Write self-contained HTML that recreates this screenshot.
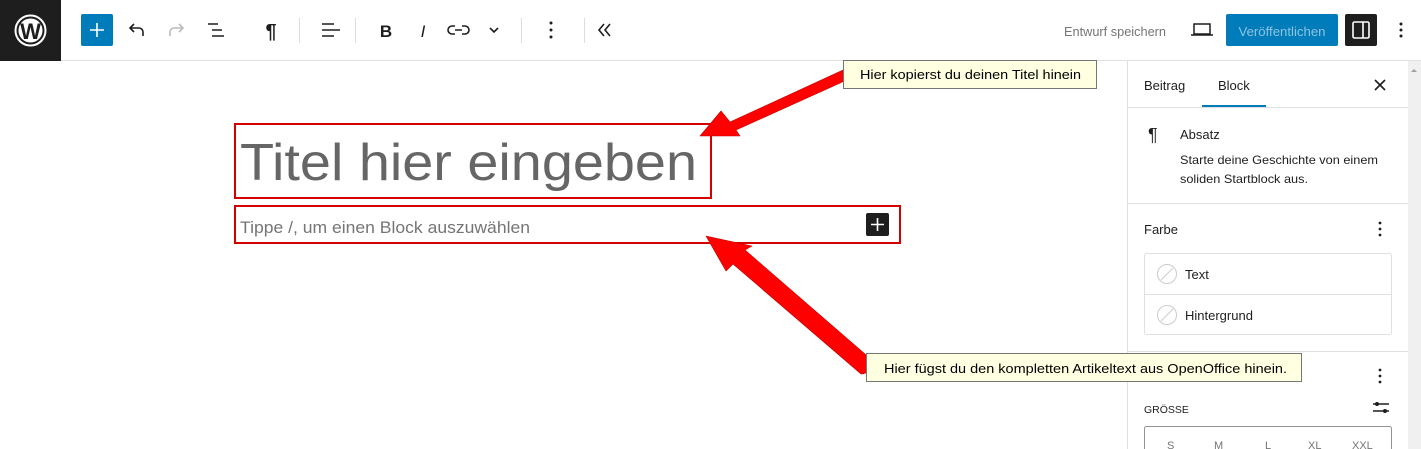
<!DOCTYPE html>
<html><head><meta charset="utf-8"><style>
html,body{margin:0;padding:0;background:#fff;width:1421px;height:449px;overflow:hidden}
svg{display:block}
text{font-family:"Liberation Sans",sans-serif}
</style></head><body>
<svg width="1421" height="449" viewBox="0 0 1421 449" xmlns="http://www.w3.org/2000/svg">
<rect x="0" y="0" width="1421" height="61" fill="#fff"/>
<line x1="61" y1="60.5" x2="1421" y2="60.5" stroke="#e0e0e0"/>
<rect x="0" y="0" width="61" height="61" fill="#1e1e1e"/>
<circle cx="30.5" cy="30.5" r="15" fill="none" stroke="#fff" stroke-width="2"/>
<circle cx="30.5" cy="30.5" r="12" fill="#fff"/>
<text x="30.5" y="39" font-size="22" font-weight="bold" text-anchor="middle" fill="#1e1e1e" font-family="Liberation Serif">W</text>
<rect x="81" y="14" width="32" height="32" rx="2" fill="#007cba"/>
<path d="M97 23v14M90 30h14" stroke="#fff" stroke-width="1.6"/>
<path d="M143 36v-4a4 4 0 0 0-4-4h-8M134 24l-4 4 4 4" fill="none" stroke="#1e1e1e" stroke-width="1.6"/>
<path d="M170 36v-4a4 4 0 0 1 4-4h8M179 24l4 4-4 4" fill="none" stroke="#bbb" stroke-width="1.6"/>
<path d="M208 24h10M212 30h10M212 36h12" stroke="#1e1e1e" stroke-width="1.6"/>
<text x="271" y="38" font-size="20" font-weight="bold" text-anchor="middle" fill="#1e1e1e">¶</text>
<line x1="299.5" y1="18" x2="299.5" y2="43" stroke="#ddd"/>
<path d="M322 24h12M322 30h18M322 36h12" stroke="#1e1e1e" stroke-width="1.6"/>
<line x1="355.5" y1="18" x2="355.5" y2="43" stroke="#ddd"/>
<text x="386" y="37" font-size="17" font-weight="bold" text-anchor="middle" fill="#1e1e1e">B</text>
<text x="423" y="37" font-size="17" font-style="italic" text-anchor="middle" fill="#1e1e1e">I</text>
<path d="M455 26h-3a4 4 0 0 0 0 8h3M462 26h3a4 4 0 0 1 0 8h-3M455 30h7" fill="none" stroke="#1e1e1e" stroke-width="1.6"/>
<path d="M490 28l4 4 4-4" fill="none" stroke="#1e1e1e" stroke-width="1.6"/>
<line x1="521.5" y1="18" x2="521.5" y2="43" stroke="#ddd"/>
<circle cx="551" cy="23" r="1.5" fill="#1e1e1e"/><circle cx="551" cy="30" r="1.5" fill="#1e1e1e"/><circle cx="551" cy="37" r="1.5" fill="#1e1e1e"/>
<line x1="584.5" y1="18" x2="584.5" y2="43" stroke="#ddd"/>
<path d="M604 24l-5 6 5 6M610 24l-5 6 5 6" fill="none" stroke="#1e1e1e" stroke-width="1.6"/>
<text x="1064" y="36" font-size="13" fill="#757575" textLength="102" lengthAdjust="spacingAndGlyphs">Entwurf speichern</text>
<rect x="1194" y="24" width="16" height="10" fill="none" stroke="#1e1e1e" stroke-width="1.5"/>
<path d="M1191 35h22" stroke="#1e1e1e" stroke-width="1.5"/>
<rect x="1226" y="14" width="112" height="32" rx="2" fill="#007cba"/>
<text x="1282" y="36" font-size="13" text-anchor="middle" fill="#8fc3e0" textLength="87" lengthAdjust="spacingAndGlyphs">Veröffentlichen</text>
<rect x="1345" y="14" width="32" height="32" rx="2" fill="#1e1e1e"/>
<rect x="1353" y="22" width="16" height="16" rx="1.5" fill="none" stroke="#fff" stroke-width="1.6"/>
<path d="M1363 22v16" stroke="#fff" stroke-width="1.6"/>
<circle cx="1401" cy="24" r="1.5" fill="#1e1e1e"/><circle cx="1401" cy="30" r="1.5" fill="#1e1e1e"/><circle cx="1401" cy="36" r="1.5" fill="#1e1e1e"/>
<line x1="1127.5" y1="61" x2="1127.5" y2="449" stroke="#e0e0e0"/>
<rect x="1408" y="61" width="13" height="388" fill="#f0f0f0"/>
<path d="M1411 72l3-3 3 3z" fill="#a0a0a0"/>
<text x="1144" y="90" font-size="13" fill="#1e1e1e">Beitrag</text>
<text x="1218" y="90" font-size="13" fill="#1e1e1e">Block</text>
<rect x="1202" y="105" width="64" height="3" fill="#007cba"/>
<path d="M1375 80l10 10M1385 80l-10 10" stroke="#1e1e1e" stroke-width="1.6"/>
<line x1="1128" y1="107.5" x2="1408" y2="107.5" stroke="#e0e0e0"/>
<text x="1148" y="141" font-size="18" fill="#1e1e1e">¶</text>
<text x="1180" y="139" font-size="13" fill="#1e1e1e">Absatz</text>
<text x="1180" y="164" font-size="12" fill="#1e1e1e" textLength="198" lengthAdjust="spacingAndGlyphs">Starte deine Geschichte von einem</text>
<text x="1180" y="183" font-size="12" fill="#1e1e1e" textLength="128" lengthAdjust="spacingAndGlyphs">soliden Startblock aus.</text>
<line x1="1128" y1="203.5" x2="1408" y2="203.5" stroke="#e0e0e0"/>
<text x="1144" y="234" font-size="13" fill="#1e1e1e">Farbe</text>
<circle cx="1380" cy="223" r="1.4" fill="#1e1e1e"/><circle cx="1380" cy="229" r="1.4" fill="#1e1e1e"/><circle cx="1380" cy="235" r="1.4" fill="#1e1e1e"/>
<rect x="1144.5" y="253.5" width="247" height="81" rx="2" fill="#fff" stroke="#e0e0e0"/>
<line x1="1145" y1="294.5" x2="1391" y2="294.5" stroke="#e0e0e0"/>
<circle cx="1167" cy="274" r="9.5" fill="none" stroke="#ccc"/><path d="M1161 280l12-12" stroke="#ccc"/>
<text x="1185" y="279" font-size="13" fill="#1e1e1e">Text</text>
<circle cx="1167" cy="315" r="9.5" fill="none" stroke="#ccc"/><path d="M1161 321l12-12" stroke="#ccc"/>
<text x="1185" y="320" font-size="13" fill="#1e1e1e">Hintergrund</text>
<line x1="1128" y1="351.5" x2="1408" y2="351.5" stroke="#e0e0e0"/>
<circle cx="1380" cy="370" r="1.4" fill="#1e1e1e"/><circle cx="1380" cy="376" r="1.4" fill="#1e1e1e"/><circle cx="1380" cy="382" r="1.4" fill="#1e1e1e"/>
<text x="1144" y="413" font-size="10.5" fill="#1e1e1e">GRÖSSE</text>
<path d="M1373 404h16M1373 411h16" stroke="#1e1e1e" stroke-width="1.4"/>
<circle cx="1377" cy="404" r="2" fill="#1e1e1e"/><circle cx="1385" cy="411" r="2" fill="#1e1e1e"/>
<rect x="1144.5" y="426.5" width="247" height="40" rx="2" fill="#fff" stroke="#949494"/>
<text font-size="11" fill="#757575"><tspan x="1167" y="449">S</tspan><tspan x="1214" y="449">M</tspan><tspan x="1265" y="449">L</tspan><tspan x="1308" y="449">XL</tspan><tspan x="1352" y="449">XXL</tspan></text>
<rect x="235" y="124" width="476" height="74" fill="none" stroke="#d40000" stroke-width="2"/>
<text x="240" y="180" font-size="52" fill="#666" textLength="457" lengthAdjust="spacingAndGlyphs">Titel hier eingeben</text>
<rect x="235" y="206" width="665" height="37" fill="none" stroke="#d40000" stroke-width="2"/>
<text x="240" y="233" font-size="17" fill="#757575" textLength="290" lengthAdjust="spacingAndGlyphs">Tippe /, um einen Block auszuwählen</text>
<rect x="866" y="213" width="23" height="23" rx="2" fill="#1e1e1e"/>
<path d="M877.5 218v13M871 224.5h13" stroke="#fff" stroke-width="1.6"/>
<g fill="#ff0000" stroke="#c00000" stroke-width="0.6" stroke-linejoin="round">
<path d="M843 70 L730 122 L721 111 L700 136 L740 136 L736 130 L849 79 Q852 72 843 70 Z"/>
<path d="M873 361 L745 250 L752 246 L706 236 L726 271 L733 264 L861 374 Q870 374 873 361 Z"/>
</g>
<rect x="843.5" y="60.5" width="253" height="28" fill="#ffffe1" stroke="#767676"/>
<text x="860" y="79" font-size="13" fill="#000" textLength="221" lengthAdjust="spacingAndGlyphs">Hier kopierst du deinen Titel hinein</text>
<rect x="866.5" y="353.5" width="435" height="28" fill="#ffffe1" stroke="#767676"/>
<text x="884" y="373" font-size="13" fill="#000" textLength="403" lengthAdjust="spacingAndGlyphs">Hier fügst du den kompletten Artikeltext aus OpenOffice hinein.</text>
</svg>
</body></html>
